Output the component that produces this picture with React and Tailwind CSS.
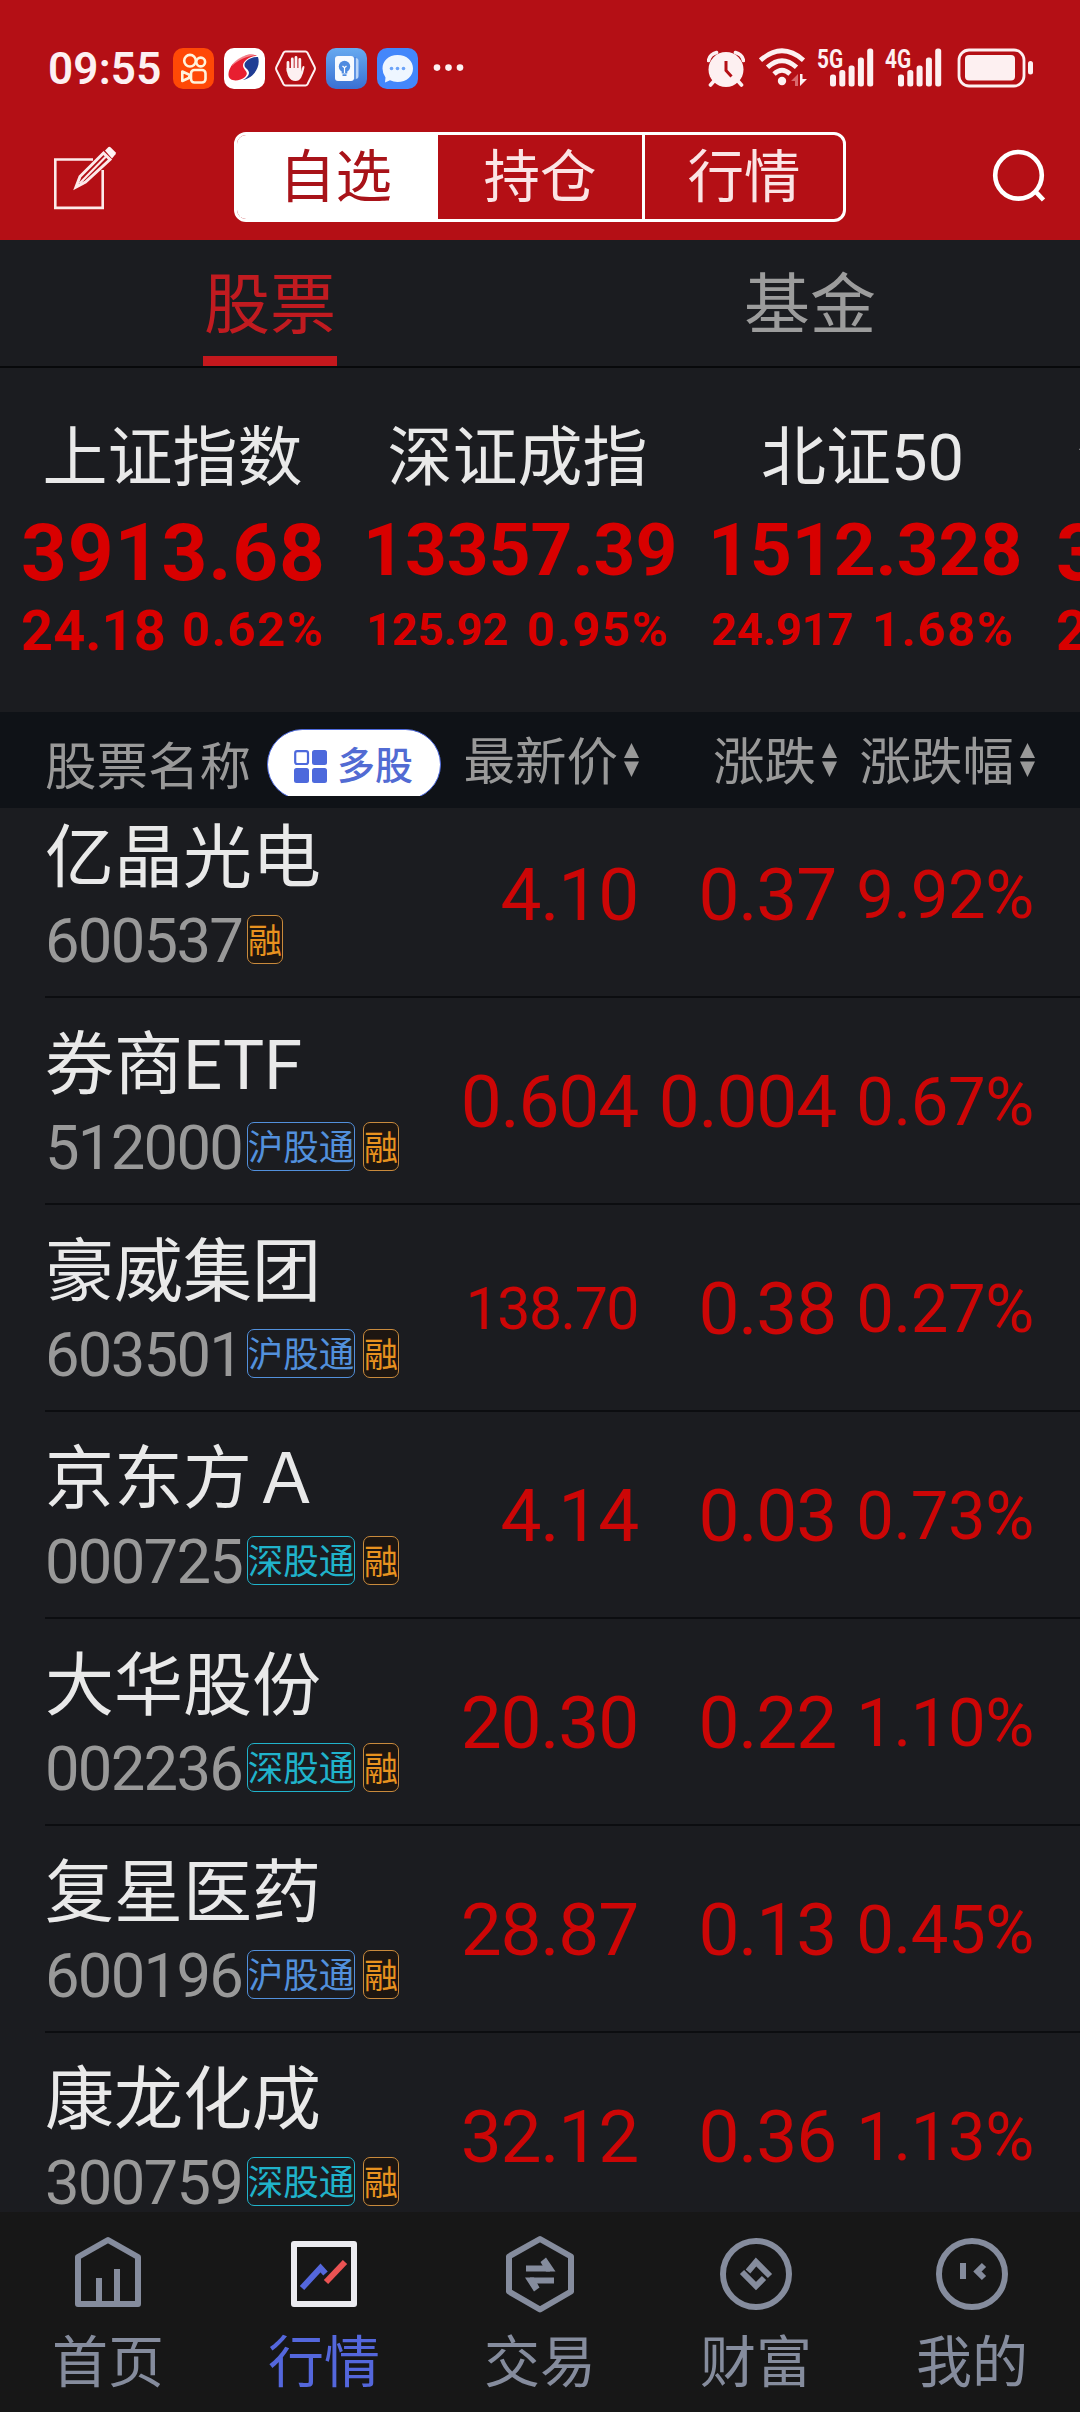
const INDEXES = [
  { name: "上证指数", value: "3913.68", change: "24.18", pct: "0.62%", long: false },
  { name: "深证成指", value: "13357.39", change: "125.92", pct: "0.95%", long: true },
  { name: "北证50", value: "1512.328", change: "24.917", pct: "1.68%", long: true },
  { name: "创业板指", value: "3", change: "2", pct: "", long: false },
];

const STOCKS = [
  { name: "亿晶光电", code: "600537", market: null, price: "4.10", change: "0.37", pct: "9.92%" },
  { name: "券商ETF", code: "512000", market: "沪股通", price: "0.604", change: "0.004", pct: "0.67%" },
  { name: "豪威集团", code: "603501", market: "沪股通", price: "138.70", change: "0.38", pct: "0.27%" },
  { name: "京东方Ａ", code: "000725", market: "深股通", price: "4.14", change: "0.03", pct: "0.73%" },
  { name: "大华股份", code: "002236", market: "深股通", price: "20.30", change: "0.22", pct: "1.10%" },
  { name: "复星医药", code: "600196", market: "沪股通", price: "28.87", change: "0.13", pct: "0.45%" },
  { name: "康龙化成", code: "300759", market: "深股通", price: "32.12", change: "0.36", pct: "1.13%" },
];

function Signal({ label }) {
  return (
    <div className="flex h-[39px] w-[57px]">
      <span className="w-[13px] origin-left scale-x-80 text-[26px] leading-[23px] font-bold whitespace-nowrap">{label}</span>
      <svg className="h-[39px] w-[44px] shrink-0" viewBox="0 0 44 39" fill="currentColor">
        <rect x="0" y="26.5" width="6" height="12" rx="2.5" />
        <rect x="9.3" y="22" width="6" height="16.5" rx="2.5" />
        <rect x="18.6" y="17.5" width="6" height="21" rx="2.5" />
        <rect x="27.9" y="9.5" width="6" height="29" rx="2.5" />
        <rect x="37.2" y="0.5" width="6" height="38" rx="2.5" />
      </svg>
    </div>
  );
}

function StatusBar() {
  return (
    <div className="flex h-[132px] items-start pt-12 pl-12 text-[#fdf0f1]">
      <span className="w-[125px] text-[44px] leading-[42px] font-semibold tracking-[0.2px]">09:55</span>
      <div className="flex gap-[10px]">
        <svg className="size-[41px]" viewBox="0 0 41 41" fill="none">
          <rect width="41" height="41" rx="10" fill="#ff4906" />
          <g stroke="#fff4dc" strokeWidth="2.6" strokeLinejoin="round">
            <circle cx="17" cy="12.7" r="5.8" />
            <circle cx="27.7" cy="14" r="4.4" />
            <rect x="18" y="22" width="14.5" height="12.5" rx="3.5" />
            <path d="M9.3 23.5v9.5l7-3.3v-3z" />
          </g>
        </svg>
        <svg className="size-[41px]" viewBox="0 0 41 41">
          <rect width="41" height="41" rx="10" fill="#fff" />
          <path d="M33 8C25 3 6 12 4.500 26C4 34 15 34 21 29C26 24 19 22 19 17.500C19 13 26 8 33 8z" fill="#e81f30" />
          <path d="M34 9C27 9 20 13 20.500 17.500C21 21 25 21 25 25C25 28 21 31 19 32C30 30 37 18 34 9z" fill="#203d94" />
          <path d="M8 18C11 10 23 5 32 7.500C22 8 14 12 8 18z" fill="#fff" opacity=".45" />
        </svg>
        <svg className="size-[41px]" viewBox="0 0 41 41" fill="none">
          <path d="M10.500 3.500h20q1.200 0 2 1.200l7 14q.9 1.800 0 3.600l-7 14q-.8 1.200-2 1.200h-20q-1.200 0-2-1.200l-7-14q-.9-1.800 0-3.600l7-14q.8-1.200 2-1.200z" stroke="currentColor" strokeWidth="2" />
          <path d="M13 23V14.500M17.300 22V11M21 22V9.500M24.800 22V11.500" stroke="currentColor" strokeWidth="2.800" strokeLinecap="round" />
          <path d="M11.600 20h14.600v3.500l1-4q.8-2 2-1.300.5.400 0 2.300-.8 4.500-3 9-2 3.500-5.700 3.500-4.500 0-7-4.500-1.500-2.500-1.900-8.500z" fill="currentColor" />
        </svg>
        <svg className="size-[41px]" viewBox="0 0 41 41">
          <defs>
            <linearGradient id="note" x1="0" y1="0" x2="0" y2="1">
              <stop offset="0" stopColor="#67aaf0" />
              <stop offset="1" stopColor="#3a70d3" />
            </linearGradient>
          </defs>
          <rect width="41" height="41" rx="10" fill="url(#note)" />
          <path d="M26 10h3.500q3 0 3 3v15q0 3-3 3H26z" fill="#b9d4f8" />
          <rect x="9" y="8" width="19" height="25" rx="3" fill="#f7faff" />
          <path d="M29 9v23" stroke="#4b86df" strokeWidth="1.600" />
          <circle cx="18.500" cy="18.500" r="5.700" fill="#4f8be0" />
          <path d="M15.700 22h5.600v3.500h-5.600zM16.500 26.300h4v1.700h-4z" fill="#4f8be0" />
          <path d="M16.500 18l2 1.800 2-1.800M18.500 20v5" stroke="#fff" strokeWidth="1.200" fill="none" />
        </svg>
        <svg className="size-[41px]" viewBox="0 0 41 41">
          <rect width="41" height="41" rx="10" fill="#4387fb" />
          <path d="M20.500 7C30 7 36 13 36 20.500S30 34 20.500 34q-4 0-7.500-1.800L8 34.500l.5-5Q5.500 25.500 5.500 20.500C5.500 13 11.500 7 20.500 7z" fill="#eef6ff" />
          <g fill="#6ba3f8">
            <circle cx="14.500" cy="20.500" r="1.800" />
            <circle cx="20.500" cy="20.500" r="1.800" />
            <circle cx="26.500" cy="20.500" r="1.800" />
          </g>
        </svg>
      </div>
      <svg className="ml-[15px] h-[41px] w-8" viewBox="0 0 32 41" fill="currentColor">
        <circle cx="4" cy="19.600" r="3.300" />
        <circle cx="15.500" cy="19.600" r="3.300" />
        <circle cx="27" cy="19.600" r="3.300" />
      </svg>
      <svg className="ml-[242px] h-[41px] w-[38px]" viewBox="0 0 38 41" fill="none">
        <path d="M1.500 12.500Q3 6 9.500 4.500M28.500 4.500Q35 6 36.500 12.500M7 33l-3.500 4M31 33l3.500 4" stroke="currentColor" strokeWidth="3.600" strokeLinecap="round" />
        <circle cx="19" cy="21.500" r="17.500" fill="currentColor" />
        <path d="M19 13v9.500l5.500 6" stroke="#b40f15" strokeWidth="3" />
      </svg>
      <svg className="ml-[14px] h-[41px] w-[49px]" viewBox="0 0 49 41" fill="none">
        <g stroke="currentColor" strokeWidth="4.800">
          <path d="M1.500 12.200Q23 -6.500 44.500 12.200" />
          <path d="M8.500 19.300Q23 6 37.500 19.300" />
          <path d="M15 26Q23 18.500 31 26" />
        </g>
        <circle cx="23" cy="33" r="4.200" fill="currentColor" />
        <path d="M39 26v12h-3v-5H32z" fill="#d8686d" />
        <path d="M41 26h2.500v5h4.500L41 38z" fill="currentColor" />
      </svg>
      <div className="ml-[9px] flex gap-[11px]">
        <Signal label="5G" />
        <Signal label="4G" />
      </div>
      <svg className="ml-[15px] h-[41px] w-[78px]" viewBox="0 0 78 41" fill="none">
        <rect x="2" y="2" width="65" height="36" rx="10" stroke="currentColor" strokeWidth="2.800" />
        <rect x="8" y="7" width="50" height="25.500" rx="4" fill="currentColor" />
        <rect x="71" y="13" width="5" height="13.500" rx="2.500" fill="currentColor" />
      </svg>
    </div>
  );
}

function TopNav() {
  return (
    <div className="flex h-[108px] items-start">
      <svg className="mt-[13px] ml-[52px] h-[66px] w-[66px]" viewBox="0 0 66 66" fill="none">
        <path d="M41 14.500H3.300v48.400h47.400V25" stroke="#fdeaea" strokeWidth="2.600" />
        <path d="M24 42l4-10.500L51.500 8l6.500 6.500L33.500 37z" stroke="#fdeaea" strokeWidth="3" />
        <path d="M27.500 38.500L54 11.500" stroke="#fdeaea" strokeWidth="2.200" />
        <path d="M53 5.500l3.500-3.500q1-.8 2 .2l5 5q.8 1 0 2L60 13.500z" fill="#fff4f4" />
      </svg>
      <div className="ml-[116px] flex h-[90px] w-[612px] overflow-hidden rounded-[12px] border-[3px] border-white text-[56.5px] leading-[87px] text-[#fbe4e5]">
        <div className="w-[201px] bg-white pr-1 text-center text-[#a81319]">自选</div>
        <div className="w-[204px] text-center">持仓</div>
        <div className="w-[201px] border-l-[3px] border-white text-center">行情</div>
      </div>
      <svg className="mt-4 ml-[145px] h-[58px] w-[58px]" viewBox="0 0 58 58" fill="none" stroke="#fff" strokeWidth="4.600">
        <circle cx="27.500" cy="27.300" r="23.300" />
        <path d="M44 43l8.500 9" />
      </svg>
    </div>
  );
}

function IndexCard({ item }) {
  return (
    <div className="w-[345px] shrink-0 overflow-hidden">
      <div className="h-[96px] text-center text-[65px] leading-[97px] text-[#e9e9e9]">{item.name}</div>
      <div className={item.long ? "flex h-[92px] items-center pb-[5px] pl-[18px] text-[73px] leading-[86px] font-bold" : "flex h-[92px] items-center pt-[3px] pl-[21px] text-[80px] leading-[89px] font-bold tracking-[0.9px]"}>{item.value}</div>
      <div className="flex h-[64px] items-center pl-[21px] font-bold">
        <span className={item.long ? "w-[161px] text-[45px] leading-[60px]" : "w-[161px] pt-[2px] text-[56px] leading-[60px]"}>{item.change}</span>
        <span className="text-[49px] leading-[60px] tracking-[1.6px]">{item.pct}</span>
      </div>
    </div>
  );
}

function SortArrows() {
  return (
    <svg className="ml-[6px] h-[34px] w-[15px]" viewBox="0 0 15 34" fill="#999">
      <path d="M7.500 0L15 15H0z" />
      <path d="M7.500 34L15 18.500H0z" />
    </svg>
  );
}

function HeaderCell({ children }) {
  return (
    <div className="flex w-[198px] items-center justify-end">
      <span className="pt-[5px] leading-[91px]">{children}</span>
      <SortArrows />
    </div>
  );
}

function ListHeader() {
  return (
    <div className="flex h-24 shrink-0 bg-[#0f1217] text-[51.5px] text-[#999]">
      <div className="w-[267px] pt-[8px] pl-[45px] leading-[96px]">股票名称</div>
      <div className="mt-[17px] h-[67px] w-[174px] overflow-hidden">
        <div className="flex h-[71px] items-center rounded-full border border-[#4d69dc] bg-white pl-[26px]">
          <svg className="mt-[3px] h-[33px] w-[33px]" viewBox="0 0 33 33" fill="#4d69dc">
            <rect x="1.200" y="1.200" width="12.800" height="12.800" rx="2" fill="none" stroke="#4d69dc" strokeWidth="2.200" />
            <rect x="18" y="0" width="15" height="15" rx="2.500" />
            <rect x="0" y="18" width="15" height="15" rx="2.500" />
            <rect x="18" y="18" width="15" height="15" rx="2.500" />
          </svg>
          <span className="ml-[10px] pt-[2px] text-[38px] leading-[60px] font-medium text-[#526bd3]">多股</span>
        </div>
      </div>
      <HeaderCell>最新价</HeaderCell>
      <HeaderCell>涨跌</HeaderCell>
      <HeaderCell>涨跌幅</HeaderCell>
    </div>
  );
}

function StockRow({ s }) {
  return (
    <div className="ml-[45px] flex h-[207px] border-b-2 border-[#0c0d10]">
      <div className="w-[395px] pt-[18px]">
        <div className="h-[100px] text-[69px] leading-[100px] whitespace-nowrap text-[#e9e9e9]">{s.name}</div>
        <div className="mt-[5px] flex h-[50px] items-center">
          <span className="w-[202px] pt-[4px] text-[61.5px] leading-[50px] tracking-[-1.7px] text-[#999]">{s.code}</span>
          {s.market && (
            <span className={s.market === "沪股通"
              ? "mr-2 flex h-[49px] w-[108px] justify-center rounded-[7px] border border-[#5290dc] text-[35.500px] leading-[50px] whitespace-nowrap text-[#5290dc]"
              : "mr-2 flex h-[49px] w-[108px] justify-center rounded-[7px] border border-[#20b3cb] text-[35.500px] leading-[50px] whitespace-nowrap text-[#20b3cb]"}>
              {s.market}
            </span>
          )}
          <span className="flex h-[49px] w-9 justify-center rounded-[7px] border border-[#c98a3c] bg-[#1d1611] text-[34px] leading-[50px] text-[#e8921f]">融</span>
        </div>
      </div>
      <div className="flex items-center pt-1 text-[73px] tracking-[-1.2px] text-[#cc0606]">
        <div className={s.price.length > 5 ? "w-[198px] text-right text-[59px] tracking-[-1.5px]" : "w-[198px] text-right"}>{s.price}</div>
        <div className="w-[198px] text-right">{s.change}</div>
        <div className="w-[198px] text-right text-[67px] tracking-[-0.4px]">{s.pct}</div>
      </div>
    </div>
  );
}

const TABS = [
  {
    label: "首页",
    icon: <path d="M36 5L66 22v47H6V22zM27 69V43M45 69V34" />,
  },
  {
    label: "行情",
    icon: (
      <>
        <rect x="6" y="9" width="60" height="60" stroke="#ececf0" />
        <path d="M14 53L32.500 33l5 5.500" stroke="#5467dc" strokeLinejoin="miter" />
        <path d="M38 47L57 27" stroke="#ea5353" />
      </>
    ),
  },
  {
    label: "交易",
    icon: (
      <>
        <path d="M36 4L67 21.500v35L36 74.500L5 56.500v-35z" />
        <path d="M22 33.500h24M50 45.500H26" />
        <path d="M36.500 27l5.500-4.500L51.500 36.500H42zM35.500 52.500L30 56.500L21 42.500h9z" fill="#858c9d" stroke="none" />
      </>
    ),
  },
  {
    label: "财富",
    icon: (
      <>
        <circle cx="36" cy="39" r="33" />
        <path d="M28 36.500l8-9.500L50 41M44 43l-8 8L22 37" strokeLinejoin="miter" />
      </>
    ),
  },
  {
    label: "我的",
    icon: (
      <>
        <circle cx="36" cy="39" r="33" />
        <path d="M27 28v16M48 30l-6.500 6.500L48 43" strokeLinejoin="miter" />
      </>
    ),
  },
];

function TabBar() {
  return (
    <div className="flex h-[200px] shrink-0 bg-[#171717]">
      {TABS.map((t) => (
        <div key={t.label} className="flex w-[216px] flex-col items-center pt-[23px]">
          <svg className="h-[80px] w-[72px]" viewBox="0 0 72 80" fill="none" stroke="#858c9d" strokeWidth="6" strokeLinejoin="round">{t.icon}</svg>
          <div className={t.label === "行情" ? "mt-[14px] text-[56px] leading-[68px] text-[#5467dc]" : "mt-[14px] text-[56px] leading-[68px] text-[#858c9d]"}>{t.label}</div>
        </div>
      ))}
    </div>
  );
}

export default function App() {
  return (
    <div lang="zh-CN" className="flex h-[2412px] w-[1080px] flex-col overflow-hidden bg-[#1b1c20] font-['Roboto','Noto_Sans_CJK_SC',sans-serif]">
      <header className="h-[240px] shrink-0 bg-[#b40f15]">
        <StatusBar />
        <TopNav />
      </header>
      <div className="flex h-32 shrink-0 border-b-2 border-[#08090b] text-[66px]">
        <div className="flex w-1/2 flex-col items-center">
          <div className="h-[116px] leading-[132px] text-[#c11b20]">股票</div>
          <div className="h-[10px] w-[134px] bg-[#c4181d]" />
        </div>
        <div className="w-1/2 text-center leading-[131px] text-[#9c9c9c]">基金</div>
      </div>
      <div className="flex h-[344px] shrink-0 overflow-hidden pt-[42px] text-[#d80000]">
        {INDEXES.map((i) => <IndexCard key={i.name} item={i} />)}
      </div>
      <ListHeader />
      <main className="h-[1404px] shrink-0 overflow-hidden">
        <div className="-mt-[17px]">
          {STOCKS.map((s) => <StockRow key={s.code} s={s} />)}
        </div>
      </main>
      <TabBar />
    </div>
  );
}
